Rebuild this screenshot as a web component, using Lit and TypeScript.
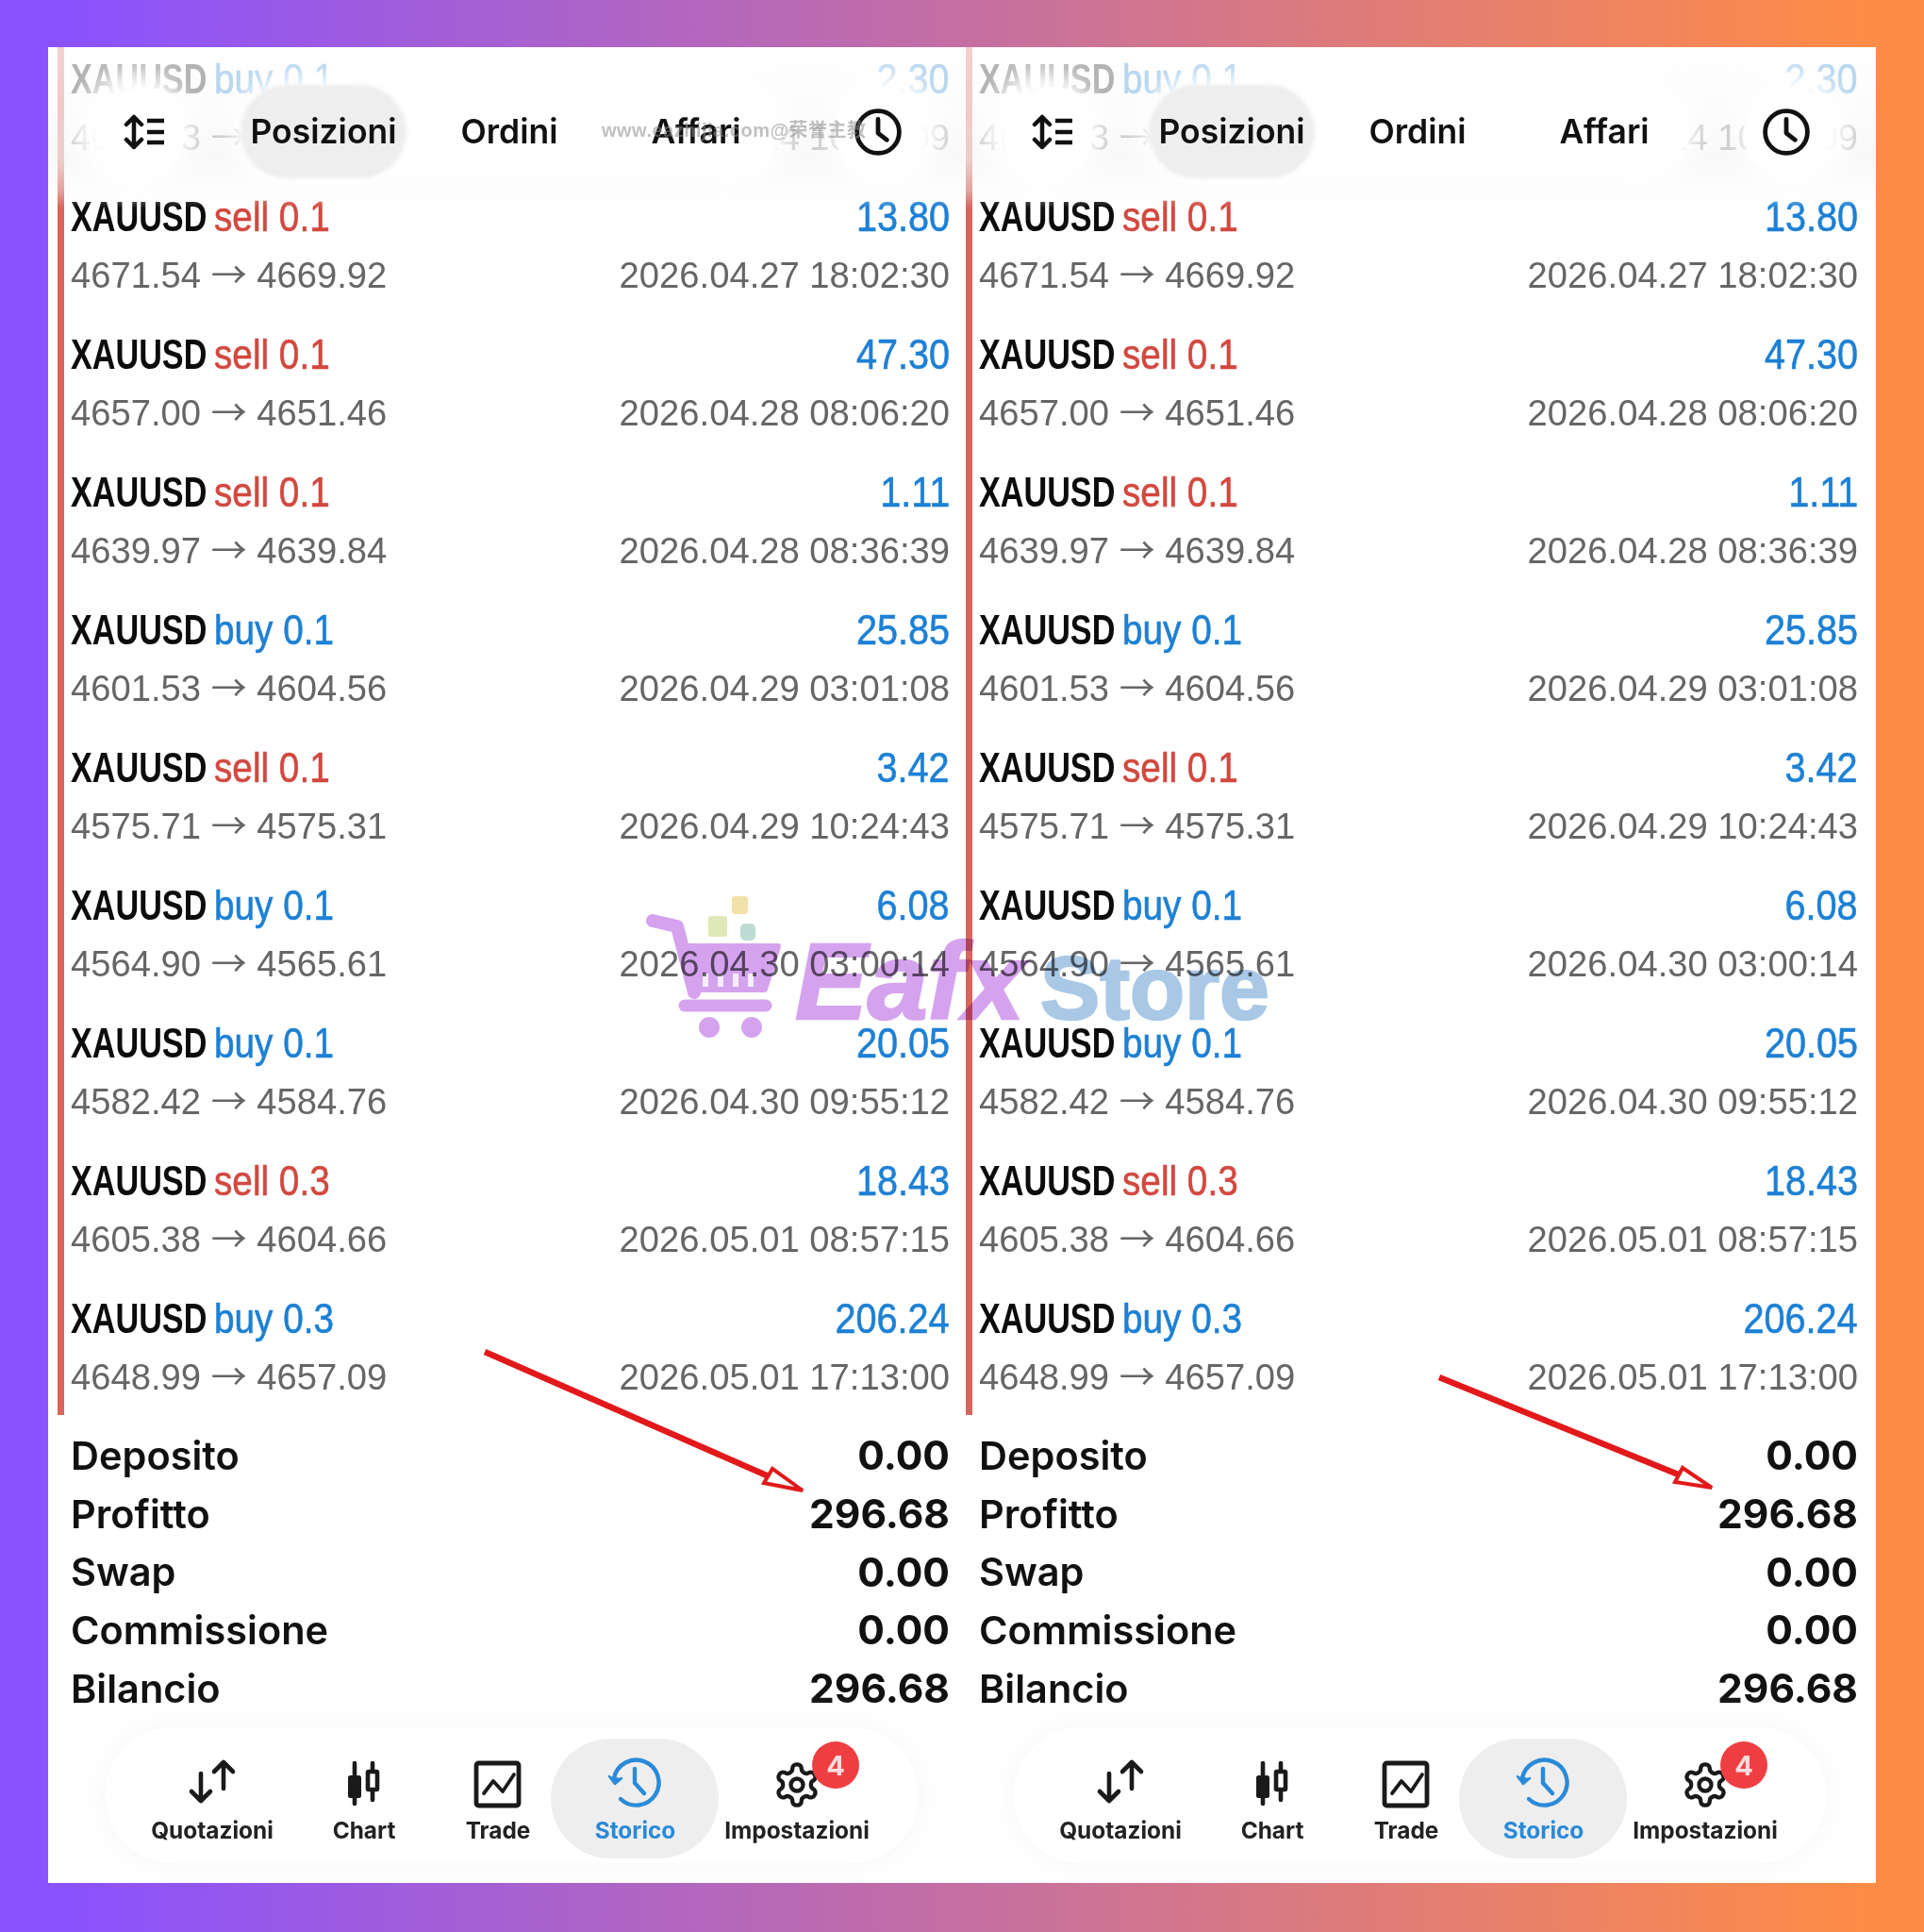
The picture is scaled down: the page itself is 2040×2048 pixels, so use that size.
import { LitElement, html, css, svg } from "lit";
import { customElement, property } from "lit/decorators.js";

type Row = [string, string, string, string, string, string];
const ROWS: Row[] = [
  ["buy", "0.1", "2.30", "4653.43", "4655.11", "2026.04.24 10:15:09"],
  ["sell", "0.1", "13.80", "4671.54", "4669.92", "2026.04.27 18:02:30"],
  ["sell", "0.1", "47.30", "4657.00", "4651.46", "2026.04.28 08:06:20"],
  ["sell", "0.1", "1.11", "4639.97", "4639.84", "2026.04.28 08:36:39"],
  ["buy", "0.1", "25.85", "4601.53", "4604.56", "2026.04.29 03:01:08"],
  ["sell", "0.1", "3.42", "4575.71", "4575.31", "2026.04.29 10:24:43"],
  ["buy", "0.1", "6.08", "4564.90", "4565.61", "2026.04.30 03:00:14"],
  ["buy", "0.1", "20.05", "4582.42", "4584.76", "2026.04.30 09:55:12"],
  ["sell", "0.3", "18.43", "4605.38", "4604.66", "2026.05.01 08:57:15"],
  ["buy", "0.3", "206.24", "4648.99", "4657.09", "2026.05.01 17:13:00"],
];
const SUMMARY: [string, string][] = [
  ["Deposito", "0.00"],
  ["Profitto", "296.68"],
  ["Swap", "0.00"],
  ["Commissione", "0.00"],
  ["Bilancio", "296.68"],
];

const GEAR =
  "M12.22 2h-.44a2 2 0 0 0-2 2v.18a2 2 0 0 1-1 1.73l-.43.25a2 2 0 0 1-2 0l-.15-.08a2 2 0 0 0-2.73.73l-.22.38a2 2 0 0 0 .73 2.73l.15.1a2 2 0 0 1 1 1.72v.51a2 2 0 0 1-1 1.74l-.15.09a2 2 0 0 0-.73 2.73l.22.38a2 2 0 0 0 2.73.73l.15-.08a2 2 0 0 1 2 0l.43.25a2 2 0 0 1 1 1.73V20a2 2 0 0 0 2 2h.44a2 2 0 0 0 2-2v-.18a2 2 0 0 1 1-1.73l.43-.25a2 2 0 0 1 2 0l.15.08a2 2 0 0 0 2.73-.73l.22-.39a2 2 0 0 0-.73-2.73l-.15-.08a2 2 0 0 1-1-1.74v-.5a2 2 0 0 1 1-1.74l.15-.09a2 2 0 0 0 .73-2.73l-.22-.38a2 2 0 0 0-2.73-.73l-.15.08a2 2 0 0 1-2 0l-.43-.25a2 2 0 0 1-1-1.73V4a2 2 0 0 0-2-2z";

@customElement("trade-phone")
class TradePhone extends LitElement {
  @property({ type: Boolean, reflect: true }) watermark = false;

  static styles = css`
    :host {
      display: block;
      position: relative;
      font-family: "Liberation Sans", sans-serif;
      --pr: 19px;
    }
    :host([watermark]) {
      --pr: 7px;
    }
    .list {
      margin-left: 10px;
      border-left: 7px solid #d9655d;
      padding: 0 var(--pr) 0 7px;
      display: flex;
      flex-direction: column;
      gap: 10px;
    }
    .row {
      height: 136px;
    }
    .top,
    .sub {
      display: flex;
      align-items: center;
      white-space: nowrap;
    }
    .top {
      height: 68px;
      font-size: 44px;
    }
    .sym {
      display: inline-block;
      width: 152px;
      font-weight: 700;
      color: #0c0c0c;
      transform: scaleX(0.777);
      transform-origin: left center;
    }
    .side {
      display: inline-block;
      transform: scaleX(0.88);
      transform-origin: left center;
      -webkit-text-stroke: 0.6px currentColor;
    }
    .sell {
      color: #d2483f;
    }
    .buy {
      color: #1d80d4;
    }
    .val {
      margin-left: auto;
      color: #1d80d4;
      transform: scaleX(0.9);
      transform-origin: right center;
      -webkit-text-stroke: 0.6px currentColor;
    }
    .sub {
      height: 56px;
      font-size: 38.2px;
      line-height: 56px;
      color: #666;
      justify-content: space-between;
    }
    .arrow {
      font-family: "Noto Sans CJK SC", sans-serif;
      font-size: 38px;
      line-height: 0;
    }
    .summary {
      padding: 12px var(--pr) 0 24px;
    }
    .sumrow {
      height: 61.7px;
      display: flex;
      justify-content: space-between;
      align-items: center;
      font-family: Inter, sans-serif;
      font-weight: 600;
      font-size: 41.5px;
      color: #111;
    }
    .sumrow b {
      font-weight: 700;
      font-size: 42.5px;
    }
    nav {
      position: relative;
      margin: 11px 0 0 60px;
      width: 863px;
      height: 144px;
      box-sizing: border-box;
      padding-left: 28px;
      display: grid;
      grid-template-columns: 172px 150px 134px 157px 186px;
      border-radius: 72px;
      background: #fff;
      box-shadow: 0 0 28px 4px #f8f8f8;
    }
    .item {
      position: relative;
      display: flex;
      flex-direction: column;
      align-items: center;
      padding-top: 35px;
      font-family: Inter, sans-serif;
      font-weight: 700;
      font-size: 24.4px;
      color: #222;
      z-index: 0;
    }
    .item svg {
      display: block;
      height: 52px;
      overflow: visible;
    }
    .item span {
      margin-top: 7px;
      line-height: 30px;
    }
    .item.on {
      color: #2a8ad8;
    }
    .item.on svg {
      margin: -3px 4px 3px 0;
    }
    .item.on::before {
      content: "";
      position: absolute;
      z-index: -1;
      left: -11px;
      right: -10px;
      top: 12px;
      bottom: 5px;
      border-radius: 64px;
      background: #eeeeee;
    }
    .badge {
      position: absolute;
      left: 109px;
      top: 15px;
      width: 50px;
      height: 50px;
      border-radius: 50%;
      background: #ee3e42;
      color: #fbdcdc;
      display: flex;
      align-items: center;
      justify-content: center;
      font-size: 29px;
      font-weight: 700;
    }
    .veil {
      position: absolute;
      left: 0;
      right: 0;
      top: 0;
      height: 170px;
      background: linear-gradient(
        180deg,
        rgba(255, 255, 255, 0.7) 0%,
        rgba(250, 250, 250, 0.68) 40%,
        rgba(246, 246, 246, 0.72) 70%,
        rgba(250, 250, 250, 0.4) 90%,
        rgba(255, 255, 255, 0) 100%
      );
    }
    header {
      position: absolute;
      left: 0;
      right: 0;
      top: 42px;
      height: 95px;
      padding-left: 59px;
      display: flex;
      gap: 61px;
      font-family: Inter, sans-serif;
      font-weight: 600;
      font-size: 35.5px;
      color: #111;
    }
    .round {
      width: 86px;
      border-radius: 50%;
      background: #fff;
      display: flex;
      align-items: center;
      justify-content: center;
    }
    .round.l {
      box-shadow: -10px 0 22px 16px #fff;
    }
    .round.r {
      box-shadow: 10px 0 22px 14px #fff;
    }
    .round svg {
      display: block;
    }
    .round.r svg {
      margin-left: 4px;
    }
    .tabs {
      width: 568px;
      display: grid;
      grid-template-columns: 172px 222px 174px;
      border-radius: 48px;
      background: #fff;
      box-shadow: 0 0 20px 10px #fff;
    }
    .tab {
      display: flex;
      align-items: center;
      justify-content: center;
      border-radius: 48px;
    }
    .tab.on {
      background: #eeeeee;
      box-shadow: 0 0 5px 2px #eeeeee;
    }
    .wm {
      position: absolute;
      left: 587px;
      top: 72px;
      font-family: "Liberation Sans", "Noto Sans CJK SC", sans-serif;
      font-weight: 700;
      font-size: 20px;
      letter-spacing: 0.5px;
      white-space: nowrap;
      color: rgba(140, 140, 140, 0.55);
    }
  `;

  render() {
    return html`
      <div class="list">
        ${ROWS.map(
          (r) => html`<div class="row">
            <div class="top">
              <span class="sym">XAUUSD</span><span class="side ${r[0]}">${r[0]} ${r[1]}</span>
              <span class="val">${r[2]}</span>
            </div>
            <div class="sub">
              <span>${r[3]} <span class="arrow">→</span> ${r[4]}</span><span>${r[5]}</span>
            </div>
          </div>`
        )}
      </div>
      <div class="summary">
        ${SUMMARY.map((s) => html`<div class="sumrow"><span>${s[0]}</span><b>${s[1]}</b></div>`)}
      </div>
      <nav>
        <div class="item">
          <svg viewBox="0 0 52 52" fill="none" stroke="#1a1a1a" stroke-width="4.6" stroke-linecap="round" stroke-linejoin="round">
            <path d="M14 14v28M4 33l10 10 10-10M38 2v28M28 12L38 2l10 10" />
          </svg>
          <span>Quotazioni</span>
        </div>
        <div class="item">
          <svg viewBox="0 0 40 52" fill="none" stroke="#1a1a1a" stroke-width="4.6" stroke-linecap="round">
            <path d="M10 3v43M29 3v39" />
            <rect x="4" y="17" width="12" height="22" rx="1.5" fill="#1a1a1a" stroke-width="2" />
            <rect x="24" y="12" width="10" height="19" rx="1" fill="#fff" />
          </svg>
          <span>Chart</span>
        </div>
        <div class="item">
          <svg viewBox="0 0 52 52" fill="none" stroke="#1a1a1a" stroke-width="4.8" stroke-linecap="round" stroke-linejoin="round">
            <rect x="3" y="3" width="45" height="45" rx="2.5" />
            <path d="M11 35l10-13 10 11 12-18" stroke-width="3.8" />
          </svg>
          <span>Trade</span>
        </div>
        <div class="item on">
          <svg viewBox="0 0 56 52" fill="none" stroke="#2a8ad8" stroke-width="4.4" stroke-linecap="round" stroke-linejoin="round">
            <path d="M7 22A24 24 0 1 1 14 44" />
            <path d="M2 20l6 8 7-6" fill="#2a8ad8" stroke-width="2.5" />
            <path d="M29 12v15l10 11" />
          </svg>
          <span>Storico</span>
        </div>
        <div class="item">
          <svg viewBox="0 0 24 24" fill="none" stroke="#1a1a1a" stroke-width="2" stroke-linecap="round" stroke-linejoin="round">
            <path d=${GEAR} />
            <circle cx="12" cy="12" r="3" />
          </svg>
          <span>Impostazioni</span>
          <div class="badge">4</div>
        </div>
      </nav>
      <div class="veil"></div>
      <header>
        <div class="round l">
          <svg width="46" height="38" viewBox="0 0 46 38" fill="none" stroke="#111" stroke-width="4.5" stroke-linecap="round" stroke-linejoin="round">
            <path d="M12 3v32M4 11l8-8 8 8M4 27l8 8 8-8" />
            <path d="M26 7h18M26 19h18M26 30h18" stroke-linecap="butt" />
          </svg>
        </div>
        <div class="tabs">
          <div class="tab on">Posizioni</div>
          <div class="tab">Ordini</div>
          <div class="tab">Affari</div>
        </div>
        <div class="round r">
          <svg width="50" height="50" viewBox="0 0 48 48" fill="none" stroke="#111" stroke-width="4.6" stroke-linecap="round" stroke-linejoin="round">
            <circle cx="24" cy="24" r="21.5" />
            <path d="M24 11v14l9 7" />
          </svg>
        </div>
      </header>
      ${this.watermark ? html`<div class="wm">www.eazhijia.com@荣誉主教</div>` : null}
    `;
  }
}

const logo = svg`
  <g fill="none" stroke="#d5a3ee" stroke-linecap="round" stroke-linejoin="round">
    <path d="M692 976l26 6 18 70" stroke-width="14" />
    <path d="M728 1003h97l-14 46h-71z" fill="#d5a3ee" stroke-width="6" />
    <path d="M726 1066h86" stroke-width="13" />
  </g>
  <path d="M748 1032v14M764 1032v14M780 1032v14M796 1032v14" stroke="#f6ecfb" stroke-width="6" />
  <circle cx="752" cy="1089" r="11" fill="#d5a3ee" />
  <circle cx="797" cy="1089" r="11" fill="#d5a3ee" />
  <rect x="776" y="950" width="17" height="19" rx="3" fill="#f3e2a8" />
  <rect x="751" y="971" width="20" height="22" rx="3" fill="#dfe8b8" />
  <rect x="785" y="979" width="16" height="18" rx="5" fill="#bfdcd4" />
  <text x="843" y="1080" font-family="Liberation Sans" font-weight="700" font-style="italic" font-size="115" fill="#d5a3ee" stroke="#d5a3ee" stroke-width="2.5">Eafx</text>
  <text x="1103" y="1080" font-family="Liberation Sans" font-weight="700" font-size="95" fill="#a8c8e6" stroke="#a8c8e6" stroke-width="2.5">Store</text>
`;

@customElement("app-root")
export class AppRoot extends LitElement {
  static styles = css`
    :host {
      display: block;
    }
    .shell {
      position: relative;
      width: 2040px;
      height: 2048px;
      box-sizing: border-box;
      padding: 50px 51px 52px;
      background: linear-gradient(90deg, #8a52ff 3%, #ff8c46 97%);
    }
    .panel {
      height: 100%;
      display: grid;
      grid-template-columns: 963px 975px;
      background: #fff;
      overflow: hidden;
    }
    trade-phone {
      filter: blur(0.6px);
    }
    .overlay {
      position: absolute;
      left: 0;
      top: 0;
      width: 2040px;
      height: 2048px;
      pointer-events: none;
    }
    .multiply {
      mix-blend-mode: multiply;
    }
  `;

  render() {
    return html`
      <div class="shell">
        <div class="panel">
          <trade-phone watermark></trade-phone>
          <trade-phone></trade-phone>
        </div>
        <svg class="overlay multiply" viewBox="0 0 2040 2048">${logo}</svg>
        <svg class="overlay" viewBox="0 0 2040 2048">
          <g fill="none" stroke="#e2191b" stroke-linejoin="miter">
            <path d="M514 1433L815 1565" stroke-width="6.5" />
            <path d="M851 1580L810 1572L819 1557Z" fill="#fff" stroke-width="4" />
            <path d="M1526 1460L1782 1564" stroke-width="6.5" />
            <path d="M1815 1577L1776 1571L1784 1556Z" fill="#fff" stroke-width="4" />
          </g>
        </svg>
      </div>
    `;
  }
}
